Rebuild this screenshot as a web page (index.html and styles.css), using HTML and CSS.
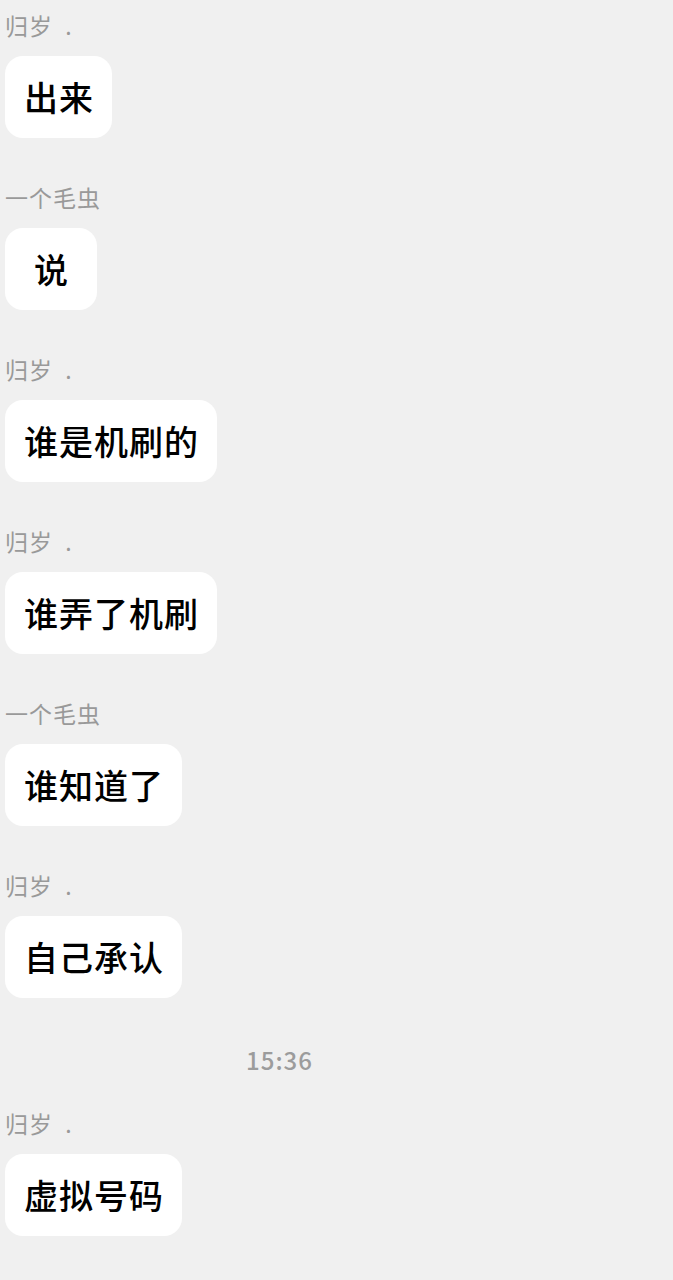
FILE: index.html
```html
<!doctype html>
<html lang="zh-CN">
<head>
    <meta charset="utf-8">
    <title>聊天记录</title>
    <link rel="stylesheet" href="styles.css">
</head>
<body>
	<div id="chat">
		<div class="mensaje">
			<div class="nombre">归岁  .</div>
			<div class="burbuja">出来</div>
		</div>
		<div class="mensaje">
			<div class="nombre">一个毛虫</div>
			<div class="burbuja">说</div>
		</div>
		<div class="mensaje">
			<div class="nombre">归岁  .</div>
			<div class="burbuja">谁是机刷的</div>
		</div>
		<div class="mensaje">
			<div class="nombre">归岁  .</div>
			<div class="burbuja">谁弄了机刷</div>
		</div>
		<div class="mensaje">
			<div class="nombre">一个毛虫</div>
			<div class="burbuja">谁知道了</div>
		</div>
		<div class="mensaje">
			<div class="nombre">归岁  .</div>
			<div class="burbuja">自己承认</div>
		</div>

		<div class="hora">15:36</div>

		<div class="mensaje">
			<div class="nombre">归岁  .</div>
			<div class="burbuja">虚拟号码</div>
		</div>
	</div>
</body>
</html>
```

FILE: styles.css
```css
body{
	margin: 0;
	background-color: #f0f0f0;
	font-family: "Noto Sans CJK SC", "Noto Sans", sans-serif;
}
#chat{
	display: flex;
	flex-direction: column;
	align-items: flex-start;
	padding: 10px 0 0 5px;
}
.mensaje{
	display: flex;
	flex-direction: column;
	align-items: flex-start;
	gap: 16px;
	margin-bottom: 44px;
}
.nombre{
	height: 30px;
	line-height: 30px;
	font-size: 23px;
	letter-spacing: 1px;
	color: #999;
	white-space: pre;
}
.burbuja{
	box-sizing: border-box;
	min-width: 92px;
	height: 82px;
	line-height: 82px;
	padding: 0 18px 0 19px;
	border-radius: 18px;
	background-color: #fff;
	color: #000;
	font-size: 34px;
	font-weight: 500;
	letter-spacing: 1px;
	text-align: center;
}
.hora{
	width: 549px;
	height: 30px;
	line-height: 30px;
	margin: 3px 0 33px;
	text-align: center;
	font-size: 24px;
	font-weight: 500;
	letter-spacing: 1px;
	color: #9c9c9c;
}
```
